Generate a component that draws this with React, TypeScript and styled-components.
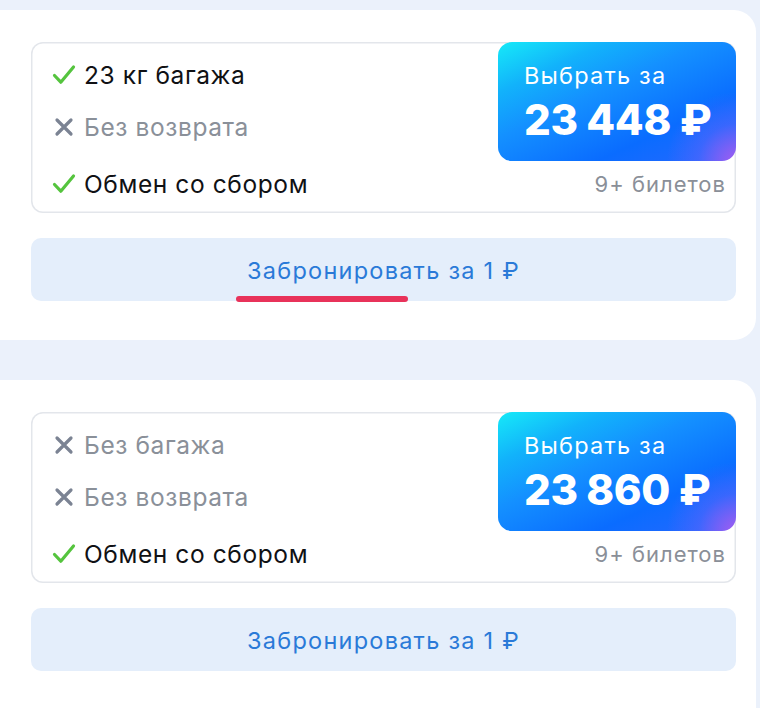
import * as React from 'react';
import styled, { createGlobalStyle } from 'styled-components';

const GlobalStyle = createGlobalStyle`
  html, body {
    margin: 0;
    padding: 0;
    background: #ebf1fb;
  }
  body {
    font-family: Inter, 'Noto Sans', 'Liberation Sans', sans-serif;
    -webkit-font-smoothing: antialiased;
  }
`;

const Page = styled.div`
  display: flex;
  flex-direction: column;
  gap: 40px;
  padding-top: 10px;
  min-height: 708px;
  box-sizing: border-box;
  background: #ebf1fb;
`;

const Card = styled.section`
  background: #fff;
  border-radius: 0 22px 22px 0;
  margin-right: 4px;
  padding: 32px 20px 39px 31px;

  &:last-child {
    padding-bottom: 70px;
  }
`;

const OfferBox = styled.div`
  display: grid;
  grid-template-columns: 1fr 238px;
  grid-template-rows: 119px 52px;
  border-radius: 12px;
  box-shadow: inset 0 0 0 1.5px #e3e6eb;
`;

const FeatureList = styled.div`
  padding: 16px 0 0 21px;
  display: flex;
  flex-direction: column;
  gap: 18px;
`;

const Feature = styled.div<{ $ok: boolean }>`
  display: flex;
  align-items: center;
  gap: 8px;
  height: 34px;
  font-size: 24.5px;
  letter-spacing: 0.6px;
  color: ${({ $ok }) => ($ok ? '#101114' : '#8a9099')};
  white-space: nowrap;
`;

const BottomFeature = styled.div`
  padding: 6px 0 0 21px;
`;

const IconBox = styled.span`
  display: flex;
  align-items: center;
  justify-content: center;
  width: 24px;
  height: 24px;
  flex-shrink: 0;
`;

const PriceButton = styled.button`
  border: 0;
  margin: 0;
  text-align: left;
  cursor: pointer;
  border-radius: 14px;
  padding: 20px 0 0 26px;
  color: #fff;
  font-family: inherit;
  display: flex;
  flex-direction: column;
  align-items: flex-start;
  background:
    radial-gradient(circle at 100% 100%, rgba(168, 92, 240, 0.95) 0, rgba(120, 96, 250, 0.35) 14%, rgba(10, 108, 255, 0) 26%),
    linear-gradient(155deg, #16eaf8 0%, #12b2fb 22%, #1490ff 42%, #0a6cff 72%, #2a68ff 100%);
`;

const PriceLabel = styled.span`
  font-size: 23.5px;
  line-height: 28px;
  font-weight: 400;
  letter-spacing: 1.2px;
`;

const PriceValue = styled.span`
  margin-top: 6px;
  font-size: 42px;
  line-height: 48px;
  font-weight: 800;
  letter-spacing: -0.4px;
`;

const Tickets = styled.div`
  padding: 6px 10px 0 0;
  text-align: right;
  font-size: 22px;
  line-height: 34px;
  letter-spacing: 1px;
  color: #8a8f98;
`;

const BookWrap = styled.div`
  position: relative;
  margin-top: 25px;
`;

const BookButton = styled.button`
  width: 100%;
  height: 63px;
  border: 0;
  border-radius: 10px;
  background: #e4eefb;
  color: #2a7ad8;
  font-family: inherit;
  font-size: 23.5px;
  letter-spacing: 1.25px;
  padding: 2px 0 0;
  cursor: pointer;
`;

const Highlight = styled.span`
  position: absolute;
  left: 205px;
  top: 58px;
  width: 172px;
  height: 6px;
  border-radius: 3px;
  background: #e8325a;
`;

const Check = () => (
  <svg width="24" height="22" viewBox="0 0 24 22">
    <path
      d="M2.5 11.5 L8.8 18.2 L21.5 3"
      fill="none"
      stroke="#55c43e"
      strokeWidth="3.2"
      strokeLinecap="round"
      strokeLinejoin="round"
    />
  </svg>
);

const Cross = () => (
  <svg width="20" height="20" viewBox="0 0 20 20">
    <path
      d="M3 3 L17 17 M17 3 L3 17"
      fill="none"
      stroke="#7b8393"
      strokeWidth="3.2"
      strokeLinecap="round"
    />
  </svg>
);

type FeatureItem = { ok: boolean; text: string };

const FeatureRow = ({ ok, text }: FeatureItem) => (
  <Feature $ok={ok}>
    <IconBox>{ok ? <Check /> : <Cross />}</IconBox>
    {text}
  </Feature>
);

type Offer = {
  features: FeatureItem[];
  price: string;
  highlighted?: boolean;
};

const offers: Offer[] = [
  {
    features: [
      { ok: true, text: '23 кг багажа' },
      { ok: false, text: 'Без возврата' },
      { ok: true, text: 'Обмен со сбором' },
    ],
    price: '23 448 ₽',
    highlighted: true,
  },
  {
    features: [
      { ok: false, text: 'Без багажа' },
      { ok: false, text: 'Без возврата' },
      { ok: true, text: 'Обмен со сбором' },
    ],
    price: '23 860 ₽',
  },
];

export default function App() {
  return (
    <>
      <GlobalStyle />
      <Page>
        {offers.map((offer, i) => {
          const [a, b, c] = offer.features;
          return (
            <Card key={i}>
              <OfferBox>
                <FeatureList>
                  <FeatureRow {...a} />
                  <FeatureRow {...b} />
                </FeatureList>
                <PriceButton>
                  <PriceLabel>Выбрать за</PriceLabel>
                  <PriceValue>{offer.price}</PriceValue>
                </PriceButton>
                <BottomFeature>
                  <FeatureRow {...c} />
                </BottomFeature>
                <Tickets>9+ билетов</Tickets>
              </OfferBox>
              <BookWrap>
                <BookButton>Забронировать за 1 ₽</BookButton>
                {offer.highlighted && <Highlight />}
              </BookWrap>
            </Card>
          );
        })}
      </Page>
    </>
  );
}
